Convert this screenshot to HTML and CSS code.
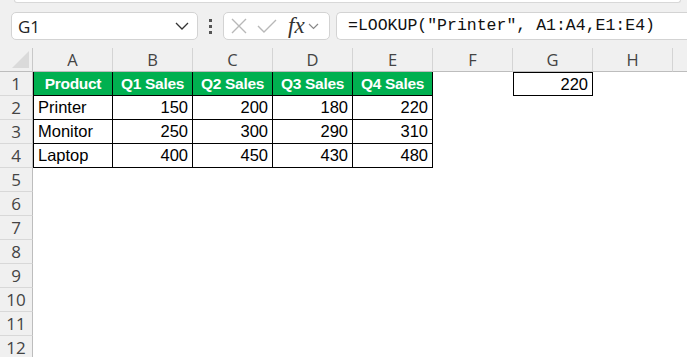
FILE: index.html
```html
<!DOCTYPE html>
<html lang="en">
<head>
    <meta charset="UTF-8">
    <title>Book1 - LOOKUP</title>
    <link rel="stylesheet" href="styles.css">
</head>
<body>
    <div class="ribbon-edge"></div>
    <div class="formula-row">
        <div class="name-box">
            <span>G1</span>
            <svg width="14" height="8" viewBox="0 0 14 8"><path d="M1 1 L7 7 L13 1" fill="none" stroke="#333" stroke-width="1.3"/></svg>
        </div>
        <div class="grip"><i></i><i></i><i></i></div>
        <div class="fx-box">
            <svg width="18" height="18" viewBox="0 0 18 18"><path d="M2 2 L16 16 M16 2 L2 16" stroke="#b8b8b8" stroke-width="1.4"/></svg>
            <svg width="20" height="16" viewBox="0 0 20 16"><path d="M1 8 L7 14 L19 2" fill="none" stroke="#b8b8b8" stroke-width="1.4"/></svg>
            <span class="fx">fx</span>
            <svg width="11" height="7" viewBox="0 0 11 7"><path d="M1 1 L5.5 5.5 L10 1" fill="none" stroke="#888" stroke-width="1.2"/></svg>
        </div>
        <div class="formula-input">=LOOKUP("Printer", A1:A4,E1:E4)</div>
    </div>

    <div class="sheet">
        <div class="corner"><span class="tri"></span></div>
        <div class="col-head">A</div>
        <div class="col-head">B</div>
        <div class="col-head">C</div>
        <div class="col-head">D</div>
        <div class="col-head">E</div>
        <div class="col-head">F</div>
        <div class="col-head">G</div>
        <div class="col-head">H</div>
        <div class="col-head last"></div>

        <div class="row-head">1</div>
        <div class="cell hdr">Product</div>
        <div class="cell hdr">Q1 Sales</div>
        <div class="cell hdr">Q2 Sales</div>
        <div class="cell hdr">Q3 Sales</div>
        <div class="cell hdr">Q4 Sales</div>
        <div class="cell"></div>
        <div class="cell num result">220</div>
        <div class="cell"></div>
        <div class="cell"></div>

        <div class="row-head">2</div>
        <div class="cell bx">Printer</div>
        <div class="cell bx num">150</div>
        <div class="cell bx num">200</div>
        <div class="cell bx num">180</div>
        <div class="cell bx num">220</div>
        <div class="cell"></div><div class="cell"></div><div class="cell"></div><div class="cell"></div>

        <div class="row-head">3</div>
        <div class="cell bx">Monitor</div>
        <div class="cell bx num">250</div>
        <div class="cell bx num">300</div>
        <div class="cell bx num">290</div>
        <div class="cell bx num">310</div>
        <div class="cell"></div><div class="cell"></div><div class="cell"></div><div class="cell"></div>

        <div class="row-head">4</div>
        <div class="cell bx">Laptop</div>
        <div class="cell bx num">400</div>
        <div class="cell bx num">450</div>
        <div class="cell bx num">430</div>
        <div class="cell bx num">480</div>
        <div class="cell"></div><div class="cell"></div><div class="cell"></div><div class="cell"></div>

        <div class="row-head">5</div><div class="blank"></div>
        <div class="row-head">6</div><div class="blank"></div>
        <div class="row-head">7</div><div class="blank"></div>
        <div class="row-head">8</div><div class="blank"></div>
        <div class="row-head">9</div><div class="blank"></div>
        <div class="row-head">10</div><div class="blank"></div>
        <div class="row-head">11</div><div class="blank"></div>
        <div class="row-head">12</div><div class="blank"></div>
    </div>
</body>
</html>
```

FILE: styles.css
```css
* {
    padding: 0;
    margin: 0;
    box-sizing: border-box;
}
body {
    width: 687px;
    height: 357px;
    overflow: hidden;
    background: #f0f0f0;
    font-family: "Liberation Sans", Arial, sans-serif;
}

/* bottom of ribbon */
.ribbon-edge {
    height: 3px;
    margin: 0 6px 0 14px;
    background: #fff;
    border: 1px solid #d8d8d8;
    border-top: none;
    border-radius: 0 0 5px 5px;
}

.formula-row {
    display: flex;
    align-items: center;
    height: 28px;
    margin-top: 9px;
    padding-left: 11px;
}
.name-box {
    width: 187px;
    height: 28px;
    background: #fff;
    border: 1px solid #d3d3d3;
    border-radius: 5px;
    display: flex;
    align-items: center;
    justify-content: space-between;
    padding: 0 8px 0 6px;
    font-family: "Open Sans", sans-serif;
    font-size: 17px;
    color: #222;
}
.grip {
    width: 25px;
    display: flex;
    flex-direction: column;
    align-items: center;
    gap: 3px;
}
.grip i {
    width: 3px;
    height: 3px;
    background: #555;
}
.fx-box {
    width: 107px;
    height: 28px;
    background: #fff;
    border: 1px solid #d3d3d3;
    border-radius: 5px;
    display: flex;
    align-items: center;
    padding-left: 6px;
    gap: 9px;
}
.fx-box .fx {
    font-family: "Liberation Serif", serif;
    font-style: italic;
    font-size: 23px;
    line-height: 26px;
    color: #333;
    margin-left: 2px;
    margin-right: -6px;
}
.formula-input {
    flex: 1;
    margin-left: 6px;
    height: 28px;
    background: #fff;
    border: 1px solid #d3d3d3;
    border-right: none;
    border-radius: 5px 0 0 5px;
    padding-left: 11px;
    font-family: "Liberation Mono", monospace;
    font-size: 16.5px;
    line-height: 26px;
    color: #111;
    white-space: nowrap;
}

/* grid */
.sheet {
    margin-top: 8px;
    display: grid;
    grid-template-columns: 33px repeat(8, 80px) 14px;
    grid-auto-rows: 24px;
    background: #fff;
}
.corner {
    background: #f0f0f0;
    border-right: 1px solid #c8c8c8;
    border-bottom: 1px solid #bdbdbd;
    position: relative;
}
.corner .tri {
    position: absolute;
    right: 3px;
    bottom: 3px;
    width: 0;
    height: 0;
    border-left: 17px solid transparent;
    border-bottom: 17px solid #dadada;
}
.col-head {
    background: #f0f0f0;
    border-right: 1px solid #d4d4d4;
    border-bottom: 1px solid #bdbdbd;
    text-align: center;
    font-family: "Open Sans", sans-serif;
    font-size: 16.5px;
    line-height: 23px;
    color: #444;
}
.col-head.last {
    border-right: none;
}
.row-head {
    grid-column: 1;
    background: #f0f0f0;
    border-right: 1px solid #bdbdbd;
    border-bottom: 1px solid #d8d8d8;
    text-align: center;
    font-family: "Open Sans", sans-serif;
    font-size: 17px;
    line-height: 23px;
    color: #444;
}
.blank {
    grid-column: 2 / -1;
}
.cell {
    font-size: 16.5px;
    line-height: 24px;
    padding: 0 4px;
    color: #000;
    white-space: nowrap;
}
.num {
    text-align: right;
}
.bx {
    border-right: 1px solid #000;
    border-bottom: 1px solid #000;
    line-height: 23px;
}
.row-head + .bx {
    border-left: 1px solid #000;
}
.hdr {
    background: #00b050;
    color: #fff;
    font-weight: bold;
    font-size: 15.5px;
    text-align: center;
    border-right: 1px solid #000;
    border-bottom: 1px solid #000;
    line-height: 23px;
    padding: 0;
    letter-spacing: -0.3px;
}
.row-head + .hdr {
    border-left: 1px solid #000;
}
.result {
    border: 1px solid #000;
    line-height: 22px;
}
```
